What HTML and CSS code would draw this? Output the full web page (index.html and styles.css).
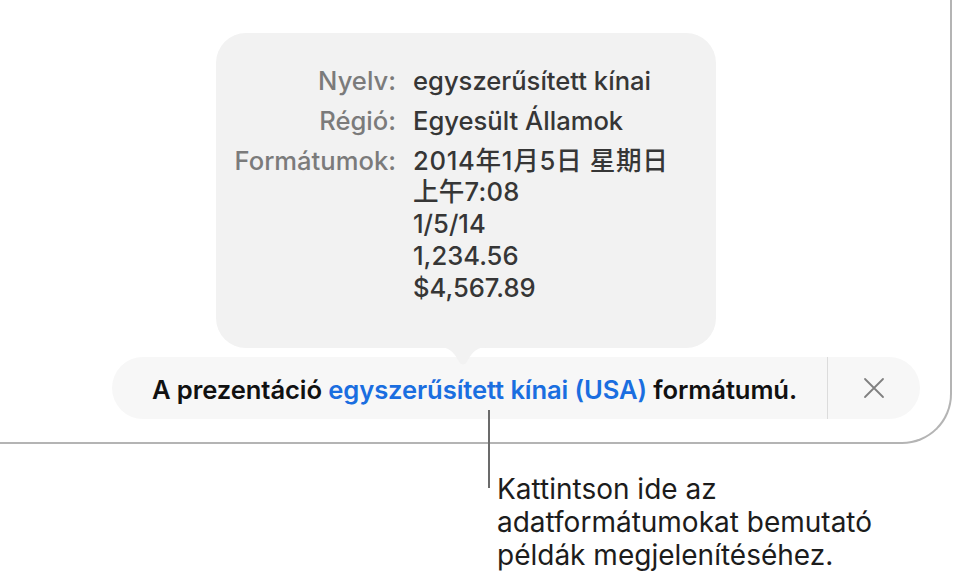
FILE: index.html
```html
<!DOCTYPE html>
<html lang="hu">
<head>
<meta charset="utf-8">
<link rel="stylesheet" href="styles.css">
</head>
<body>
<div class="stage">
  <div class="window">
    <div class="banner">
      <div class="message">A prezentáció <span class="link">egyszerűsített kínai (USA)</span> formátumú.</div>
      <div class="divider"></div>
      <div class="close">
        <svg width="22" height="22" viewBox="0 0 22 22"><path d="M2 2 L20 20 M20 2 L2 20" stroke="#808080" stroke-width="1.8" stroke-linecap="round" fill="none"/></svg>
      </div>
    </div>
  </div>

  <div class="popover">
    <div class="grid">
      <div class="label">Nyelv:</div>
      <div class="value">egyszerűsített kínai</div>
      <div class="label">Régió:</div>
      <div class="value">Egyesült Államok</div>
      <div class="label">Formátumok:</div>
      <div class="value formats">
        <div class="first">2014年1月5日 星期日</div>
        <div class="second">上午7:08</div>
        <div>1/5/14</div>
        <div>1,234.56</div>
        <div>$4,567.89</div>
      </div>
    </div>
    <svg class="arrow" width="52" height="22" viewBox="0 0 52 22"><path d="M0 0 C12 0 16 4 21 13 Q26 22 31 13 C36 4 40 0 52 0 Z" fill="#f2f2f2"/></svg>
  </div>

  <div class="callout-line"></div>
  <div class="callout">Kattintson ide az<br>adatformátumokat bemutató<br>példák megjelenítéséhez.</div>
</div>
</body>
</html>
```

FILE: styles.css
```css
html, body {
  margin: 0;
  padding: 0;
  background: #ffffff;
}

body {
  font-family: Inter, "Noto Sans CJK SC", sans-serif;
}

.stage {
  position: relative;
  width: 958px;
  height: 577px;
  overflow: hidden;
}

.window {
  width: 952px;
  height: 444px;
  border-right: 2px solid #b4b4b4;
  border-bottom: 2px solid #b4b4b4;
  border-bottom-right-radius: 50px;
  padding-top: 357px;
  box-sizing: border-box;
}

.banner {
  margin-left: 112px;
  width: 808px;
  height: 62px;
  background: #f7f7f7;
  border-radius: 31px;
  display: flex;
  align-items: stretch;
}

.message {
  flex: 1;
  display: flex;
  align-items: center;
  white-space: pre;
  padding-left: 40px;
  padding-top: 2px;
  font-size: 25.6px;
  font-weight: 600;
  color: #111111;
  letter-spacing: -0.1px;
}

.link {
  color: #1a6ee0;
}

.divider {
  width: 1px;
  background: #dcdcdc;
}

.close {
  width: 92px;
  display: flex;
  align-items: center;
  justify-content: center;
}

.popover {
  position: absolute;
  left: 216px;
  top: 33px;
  width: 500px;
  height: 315px;
  background: #f2f2f2;
  border-radius: 30px;
  box-sizing: border-box;
  padding-top: 33px;
}

.arrow {
  position: absolute;
  left: 221px;
  top: 314px;
}

.grid {
  display: grid;
  grid-template-columns: 180px auto;
  column-gap: 17px;
  row-gap: 10px;
  font-size: 25.6px;
  font-weight: 500;
  line-height: 30px;
}

.label {
  text-align: right;
  color: #7b7b7b;
}

.value {
  color: #363636;
}

.formats {
  line-height: 32px;
}

.formats .first {
  line-height: 30px;
  letter-spacing: 0.7px;
}

.formats .second {
  letter-spacing: 0.2px;
}

.callout-line {
  position: absolute;
  left: 488px;
  top: 410px;
  width: 2px;
  height: 78px;
  background: #6b6b6b;
}

.callout {
  position: absolute;
  left: 497px;
  top: 473px;
  font-size: 28px;
  line-height: 33px;
  color: #1c1c1c;
}
```
